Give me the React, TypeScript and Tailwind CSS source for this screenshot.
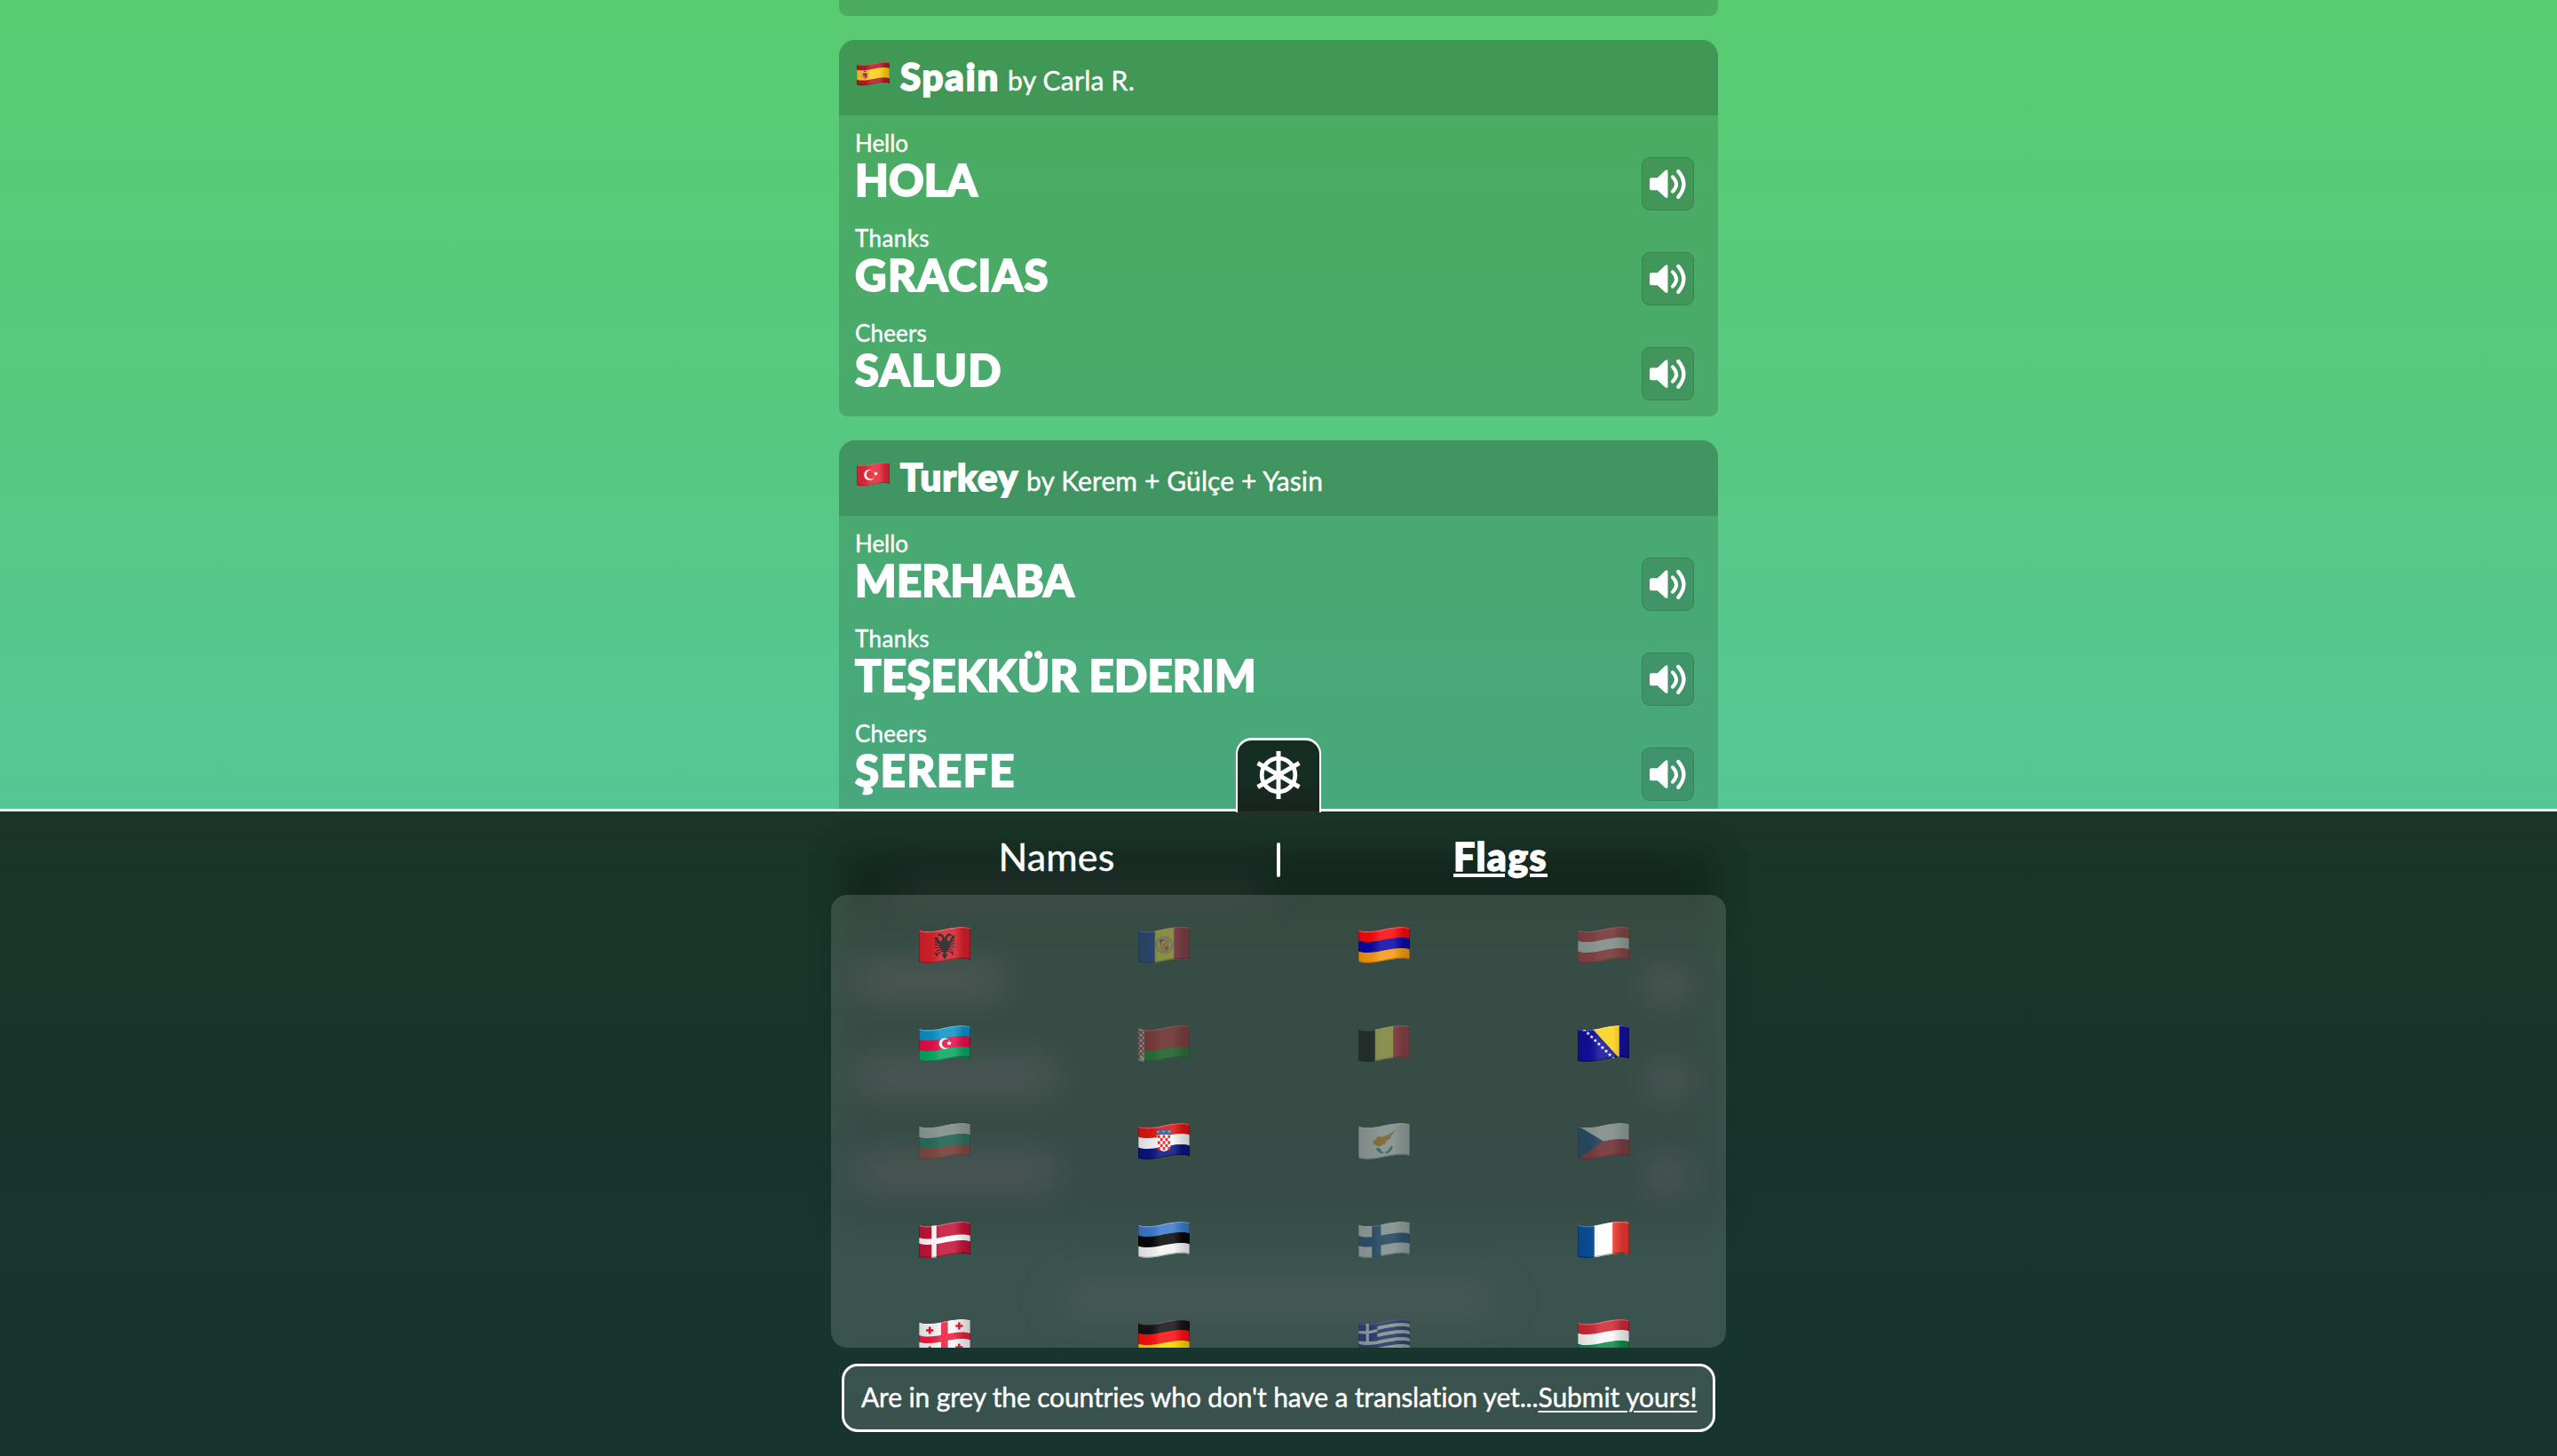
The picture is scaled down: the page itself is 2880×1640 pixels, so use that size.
import React, { useLayoutEffect, useRef, useState } from "react";

/* Text set to an exact advance width by distributing letter spacing. */
function Fit({ w, className = "", children }: { w: number; className?: string; children: string }) {
  const ref = useRef<HTMLSpanElement>(null);
  const [spacing, setSpacing] = useState(0);
  useLayoutEffect(() => {
    if (!ref.current) return;
    const natural = ref.current.getBoundingClientRect().width;
    setSpacing((w - natural) / children.length);
  }, []);
  return (
    <span ref={ref} className={"inline-block whitespace-nowrap " + className} style={{ letterSpacing: spacing + "px" }}>
      {children}
    </span>
  );
}

/* Region of a waving flag between two heights (0 = top edge, 36 = bottom edge). */
function wave(a: number, b: number, x0 = 0) {
  const t = a + 3.6;
  const u = b + 3.6;
  return `M${x0} ${t}C9 ${t + 3} 20 ${t + 0.8} 28 ${t - 1} S48 ${t - 5.2} 57 ${t - 2.4}V${u - 2.4}C48 ${u - 5.2} 36 ${u - 2.8} 28 ${u - 1}S9 ${u + 3} ${x0} ${u}Z`;
}
const Band = ({ a, b, c }: { a: number; b: number; c: string }) => <path d={wave(a, b)} fill={c} />;
const Bands = ({ c }: { c: string[] }) => (
  <>
    {c.map((v, i) => (
      <Band key={i} a={(36 / c.length) * i} b={(36 / c.length) * (i + 1) + (i < c.length - 1 ? 0.4 : 0)} c={v} />
    ))}
  </>
);
const Cols = ({ c }: { c: [string, number][] }) => (
  <>
    {c.map(([v, x], i) => (
      <rect key={i} x={x} y="-1" width={58 - x} height="44" fill={v} />
    ))}
  </>
);
const star = (cx: number, cy: number, r: number) =>
  Array.from({ length: 10 }, (_, i) => {
    const q = i % 2 ? r * 0.42 : r;
    const t = (i * Math.PI) / 5 - Math.PI / 2;
    return `${cx + q * Math.cos(t)},${cy + q * Math.sin(t)}`;
  }).join(" ");

const plus = (x: number, y: number) => (
  <path d={`M${x - 4} ${y}H${x + 4}M${x} ${y - 4}V${y + 4}`} stroke="#e8112d" strokeWidth="2.6" />
);

const art: Record<string, React.ReactNode> = {
  albania: (
    <>
      <Band a={0} b={36} c="#d8202b" />
      <g fill="none" stroke="#1c1c1c">
        <path d="M28.500 12.500Q34 17 33.500 22Q32 27 28.500 29.500Q25 27 23.500 22Q23 17 28.500 12.500Z" fill="#1c1c1c" />
        <path d="M27.500 15Q27 9.500 23 8.500L21.500 10M29.500 15Q30 9.500 34 8.500L35.500 10" strokeWidth="2.400" />
        <path d="M24 19.500L19 12M33 19.500L38.500 9.500" strokeWidth="2.200" />
        <path d="M24 18L17.500 12.500M24 20L17.500 16M24 22L17.500 19.500M24 23.500L18 23.500M25 25L19.500 27.500M33 18L39.500 11M33 20L39.500 14.500M33 22L39.500 18M33 23.500L39.500 22M32 25L38 26" strokeWidth="1.200" />
        <path d="M26 27L18.500 31.500M31 27L38.500 29.500M18 29l2.500 4M36.500 27.500l1 4.500" strokeWidth="1.300" />
      </g>
      <path d="M28.500 27l1.500 3.500 1.500-.5-1 3.500-2 3-2-3-1-3.500 1.500 .5z" fill="#1c1c1c" />
    </>
  ),
  andorra: (
    <>
      <Cols c={[["#1a3d9c", 0], ["#f0dc20", 18.5], ["#c8203c", 39.500]]} />
      <circle cx="29" cy="20.500" r="8.800" fill="#f0dc20" stroke="#a8a090" strokeWidth="3" strokeDasharray="3 1" />
      <path d="M24 14h10v10q-1 5-5 5t-5-5z" fill="#d8a040" />
      <rect x="24" y="14" width="4.500" height="6" fill="#c03048" />
      <rect x="29.500" y="22" width="4" height="4" fill="#d84040" />
      <path d="M26 20l2-4" stroke="#fff" strokeWidth="1.500" />
    </>
  ),
  armenia: <Bands c={["#f80a0a", "#0a08a8", "#f59a10"]} />,
  austria: <Bands c={["#d8303a", "#f4f4f4", "#d8303a"]} />,
  azerbaijan: (
    <>
      <Bands c={["#0d92c4", "#e4104a", "#0aa862"]} />
      <circle cx="28.500" cy="20.500" r="6.200" fill="#fff" />
      <circle cx="30.500" cy="20.500" r="5" fill="#e4104a" />
      <polygon points={star(33.500, 20, 3.200)} fill="#fff" />
    </>
  ),
  belarus: (
    <>
      <Bands c={["#c0202c", "#c0202c", "#129020"]} />
      <rect x="0" y="0" width="6.500" height="42" fill="#f0e8e8" />
      <path d="M0 5l3 3-3 3 3 3-3 3 3 3-3 3 3 3-3 3 3 3-3 3 3 3M6 5l-3 3 3 3-3 3 3 3-3 3 3 3-3 3 3 3-3 3 3 3" stroke="#b8202c" strokeWidth="1.200" fill="none" />
    </>
  ),
  belgium: <Cols c={[["#0c0c10", 0], ["#f0e048", 18.500], ["#d8243c", 38.500]]} />,
  bosnia: (
    <>
      <rect width="57" height="42" fill="#12109a" />
      <path d="M12 -1H46V37Z" fill="#fcd116" />
      {Array.from({ length: 9 }, (_, i) => (
        <polygon key={i} points={star(7.500 + i * 4, 5 + i * 4, 2.500)} fill="#fff" />
      ))}
    </>
  ),
  bulgaria: <Bands c={["#f2f2f2", "#129070", "#c83a2c"]} />,
  croatia: (
    <>
      <Bands c={["#dd1414", "#f4f4f4", "#0a1480"]} />
      <path d="M21 13H36V26q-2 5-7.500 6Q23 31 21 26Z" fill="#fff" />
      {Array.from({ length: 25 }, (_, i) =>
        i % 2 ? null : <rect key={i} x={21.500 + (i % 5) * 2.800} y={13.500 + Math.floor(i / 5) * 3.400} width="2.800" height="3.400" fill="#e01818" />,
      )}
      <path d="M20.500 12l-.5-4 3 1 2-2.500 3 1.500 3-2 2 2 3-1-.5 5z" fill="#2850a0" />
      <path d="M21 10h2M27 9.500h2M33 9.500h3" stroke="#30d0e0" strokeWidth="2" />
      <path d="M24.500 8v3M31 8v3" stroke="#d02030" strokeWidth="1.200" />
    </>
  ),
  cyprus: (
    <>
      <Band a={0} b={36} c="#f2f2f2" />
      <path d="M16.500 20l3-1.500 2-3.500 5 .5 6-2 9-6-5.500 7-.5 3-4 2-2 4-7 3-4-2-2-2z" fill="#dc8a20" />
      <path d="M20.500 28q2 5 7 5.500M37 26q-1 6-7 7.500M22 29.500l3 .5M34 30l2-1" stroke="#2c8a68" strokeWidth="2.200" fill="none" />
    </>
  ),
  czech: (
    <>
      <Band a={0} b={18.400} c="#f2f2f2" />
      <Band a={18} b={36} c="#cc2030" />
      <path d="M0 3L28.500 20.500 0 41Z" fill="#14487e" />
    </>
  ),
  denmark: (
    <>
      <Band a={0} b={36} c="#c4143a" />
      <Band a={14.500} b={21} c="#fff" />
      <rect x="14" y="0" width="5.400" height="44" fill="#fff" />
    </>
  ),
  estonia: <Bands c={["#3c7acb", "#080808", "#f4f4f4"]} />,
  finland: (
    <>
      <Band a={0} b={36} c="#f2f2f2" />
      <Band a={12.500} b={23.500} c="#1c4c8c" />
      <rect x="15" y="0" width="10" height="44" fill="#1c4c8c" />
    </>
  ),
  france: <Cols c={[["#0a509c", 0], ["#ffffff", 18.500], ["#ee3a30", 38.500]]} />,
  georgia: (
    <>
      <Band a={0} b={36} c="#f6f6f6" />
      <Band a={14.500} b={22} c="#ea2040" />
      <rect x="24.500" y="0" width="7.500" height="44" fill="#ea2040" />
      {plus(12, 12.500)}
      {plus(44.500, 7.500)}
      {plus(12, 34.500)}
      {plus(44.500, 31.500)}
    </>
  ),
  germany: <Bands c={["#141414", "#fa1010", "#f8d400"]} />,
  greece: (
    <>
      <Bands c={["#1a2494", "#f2f2f2", "#1a2494", "#f2f2f2", "#1a2494", "#f2f2f2", "#1a2494", "#f2f2f2", "#1a2494"]} />
      <rect x="0" y="0" width="21" height="24.500" fill="#1a2494" />
      <path d="M0 14.500Q10 16 21 12.500M10 0V26" stroke="#f2f2f2" strokeWidth="3.200" fill="none" />
    </>
  ),
  hungary: <Bands c={["#d02836", "#f6f6f6", "#108a48"]} />,
  spain: (
    <>
      <Band a={0} b={36} c="#b81828" />
      <Band a={9.500} b={27} c="#fcd014" />
      <path d="M9 18v10M20 18v10" stroke="#d8b080" strokeWidth="2.500" />
      <path d="M11 19h7v8q-3.500 4-7 0z" fill="#c02838" />
      <path d="M11 24h3.500v4.500q-3 0-3.500-2z" fill="#e0a020" />
      <path d="M11.500 17q3-4 6 0z" fill="#a03820" />
      <circle cx="15" cy="23.500" r="1.500" fill="#384890" />
    </>
  ),
  turkey: (
    <>
      <Band a={0} b={36} c="#e4283a" />
      <circle cx="22" cy="21.500" r="9.500" fill="#fff" />
      <circle cx="24.500" cy="21" r="7.600" fill="#e4283a" />
      <polygon points={star(33, 19.500, 4.300)} fill="#fff" />
    </>
  ),
};

function Flag({ name, className }: { name: string; className: string }) {
  const id = React.useId();
  return (
    <svg viewBox="0 0 57 42" preserveAspectRatio="none" className={className}>
      <defs>
        <clipPath id={id + "c"}>
          <path d={wave(0, 36)} />
        </clipPath>
        <linearGradient id={id + "g"} x1="0" x2="1" y1="0" y2="0">
          <stop offset="0" stopColor="#000" stopOpacity=".12" />
          <stop offset=".22" stopColor="#000" stopOpacity=".06" />
          <stop offset=".42" stopColor="#fff" stopOpacity=".12" />
          <stop offset=".68" stopColor="#fff" stopOpacity=".12" />
          <stop offset=".86" stopColor="#000" stopOpacity=".12" />
          <stop offset="1" stopColor="#000" stopOpacity=".18" />
        </linearGradient>
      </defs>
      <g clipPath={`url(#${id}c)`}>
        {art[name]}
        <path d={wave(0, 36)} fill={`url(#${id}g)`} />
        <path d={wave(34.600, 36)} fill="#000" fillOpacity=".3" />
        <path d={wave(0, 1.300)} fill="#fff" fillOpacity=".25" />
        <path d="M.5 0V42M56.500 0V42" stroke="#000" strokeOpacity=".25" />
      </g>
    </svg>
  );
}

const SpeakerIcon = () => (
  <svg viewBox="0 0 59 60" className="h-[60px] w-[59px]" fill="none">
    <path d="M11 23.300H17.800L26.500 15q3-2 3 1V44q0 3-3 1.200L17.800 37.300H11Q9 37.300 9 35.300V25.300Q9 23.300 11 23.300Z" fill="#fff" />
    <path d="M35 22.300Q43 30.500 35 38.700" stroke="#fff" strokeWidth="4" strokeLinecap="round" />
    <path d="M41.300 16Q53.500 30.300 41.300 44.800" stroke="#fff" strokeWidth="4.300" strokeLinecap="round" />
  </svg>
);

const WheelIcon = () => (
  <svg viewBox="-28 -28 56 56" className="h-14 w-14" fill="none" stroke="#fff" strokeWidth="5">
    <circle r="18.800" strokeWidth="4.800" />
    <path d="M0 -27V27M-23.400 -13.500L23.400 13.500M-23.400 13.500L23.400 -13.500" />
  </svg>
);

type Phrase = { label: string; lw: number; text: string; w: number };
type Country = { flag: string; name: string; nw: number; by: string; bw: number; phrases: Phrase[] };

const countries: Country[] = [
  {
    flag: "spain", name: "Spain", nw: 112, by: "by Carla R.", bw: 143,
    phrases: [
      { label: "Hello", lw: 60, text: "HOLA", w: 138 },
      { label: "Thanks", lw: 84, text: "GRACIAS", w: 219 },
      { label: "Cheers", lw: 81, text: "SALUD", w: 166 },
    ],
  },
  {
    flag: "turkey", name: "Turkey", nw: 133, by: "by Kerem + Gülçe + Yasin", bw: 334,
    phrases: [
      { label: "Hello", lw: 60, text: "MERHABA", w: 247 },
      { label: "Thanks", lw: 84, text: "TEŞEKKÜR EDERIM", w: 452 },
      { label: "Cheers", lw: 81, text: "ŞEREFE", w: 181 },
    ],
  },
];

function Card({ c }: { c: Country }) {
  return (
    <section className="h-[424px] overflow-hidden rounded-t-[18px] rounded-b-[9px] bg-black/15">
      <header className="flex h-[85px] bg-black/12 pl-5">
        <Flag name={c.flag} className="mt-[25px] h-[27px] w-[37px]" />
        <h2 className="ml-[12px] flex items-baseline leading-[83px]">
          <Fit w={c.nw} className="text-[42px] font-black [-webkit-text-stroke:1.8px_white]">{c.name}</Fit>
          <Fit w={c.bw} className="ml-[9px] text-[30px] [-webkit-text-stroke:0.4px_white]">{c.by}</Fit>
        </h2>
      </header>
      <div className="pt-[12px]">
        {c.phrases.map((p) => (
          <div key={p.label} className="flex h-[107.200px] justify-between pr-[27px] pl-[18px]">
            <div className="pt-px">
              <div className="h-[38px] leading-[37px]">
                <Fit w={p.lw} className="text-[26px] [-webkit-text-stroke:0.4px_white]">{p.label}</Fit>
              </div>
              <div className="h-14 leading-[43px]">
                <Fit w={p.w} className="text-[49px] font-black [-webkit-text-stroke:1.8px_white]">{p.text}</Fit>
              </div>
            </div>
            <button className="mt-[35px] h-[60px] w-[59px] rounded-[9px] bg-black/12 shadow-[inset_0_0_0_1px_rgba(0,0,0,0.12)]">
              <SpeakerIcon />
            </button>
          </div>
        ))}
      </div>
    </section>
  );
}

const grid: [string, boolean][] = [
  ["albania", true], ["andorra", false], ["armenia", true], ["austria", false],
  ["azerbaijan", true], ["belarus", false], ["belgium", false], ["bosnia", true],
  ["bulgaria", false], ["croatia", true], ["cyprus", false], ["czech", false],
  ["denmark", true], ["estonia", true], ["finland", false], ["france", true],
  ["georgia", true], ["germany", true], ["greece", false], ["hungary", true],
];

/* Soft shapes of the page content that show through the drawer. */
const Haze = () => (
  <div className="pointer-events-none absolute inset-0 overflow-hidden">
    <div className="absolute top-[40px] left-[945px] h-[424px] w-[990px] rounded-[18px] bg-black/14 blur-[18px]" />
    <div className="absolute top-[46px] left-[945px] h-[72px] w-[990px] bg-black/12 blur-[18px]" />
    <div className="absolute top-[72px] left-[1010px] h-[34px] w-[420px] bg-[#e696be]/8 blur-[20px]" />
    <div className="absolute top-[172px] left-[965px] h-[36px] w-[165px] bg-[#e696be]/15 blur-[20px]" />
    <div className="absolute top-[280px] left-[965px] h-[36px] w-[225px] bg-[#e696be]/15 blur-[20px]" />
    <div className="absolute top-[388px] left-[965px] h-[36px] w-[225px] bg-[#e696be]/15 blur-[20px]" />
    <div className="absolute top-[178px] left-[1856px] h-[36px] w-[44px] bg-[#e696be]/14 blur-[18px]" />
    <div className="absolute top-[285px] left-[1856px] h-[36px] w-[44px] bg-[#e696be]/14 blur-[18px]" />
    <div className="absolute top-[392px] left-[1856px] h-[36px] w-[44px] bg-[#e696be]/14 blur-[18px]" />
    <div className="absolute top-[530px] left-[1190px] h-[40px] w-[500px] bg-[#e696be]/9 blur-[24px]" />
  </div>
);

export default function App() {
  return (
    <div className="relative h-[1640px] w-full overflow-hidden bg-[linear-gradient(180deg,#59cb70_0px,#57c87f_450px,#55c694_911px,#54c4a4_1640px)] font-['Lato','Noto_Sans',sans-serif] text-white">
      <main className="mx-auto flex w-[990px] flex-col gap-[27px]">
        <div className="h-[18px] rounded-b-[9px] bg-black/15" />
        {countries.map((c) => (
          <Card key={c.flag} c={c} />
        ))}
      </main>

      <aside className="absolute inset-x-0 top-[911px] bottom-0 border-t-[3px] border-white bg-[linear-gradient(180deg,#1b3528,#18362a_18%,#18352d_50%,#173430)]">
        <Haze />
        <button className="absolute -top-[83px] left-[1392px] flex h-[84px] w-24 justify-center rounded-t-[18px] border-x-[2.500px] border-t-[3px] border-white bg-[linear-gradient(180deg,#162d23_55%,#18231d_79px,#2e2c2c_80px,#2e2c2c_82px,#101814_83px)] pt-[11px]">
          <WheelIcon />
        </button>
        <div className="relative mx-auto w-[1008px]">
          <nav className="mx-auto flex h-[94px] w-[1000px] text-center text-[43px] leading-[101px]">
            <div className="w-[500px]">
              <Fit w={131} className="[-webkit-text-stroke:0.4px_white]">Names</Fit>
            </div>
            <div className="mt-[35px] -ml-0.5 -mr-0.5 h-[39px] w-1 shrink-0 rounded-full bg-white" />
            <div className="w-[500px]">
              <Fit w={106} className="font-black underline decoration-[4px] underline-offset-[3px] [-webkit-text-stroke:1.500px_white]">Flags</Fit>
            </div>
          </nav>
          <div className="h-[510px] overflow-hidden rounded-[18px] bg-white/15 pt-[2px] pr-[14px] pl-[4px]">
            <div className="grid grid-cols-4">
              {grid.map(([name, on]) => (
                <div key={name} className="flex h-[110.500px] items-center justify-center">
                  <Flag name={name} className={on ? "h-[42px] w-[58px]" : "h-[42px] w-[58px] opacity-45"} />
                </div>
              ))}
            </div>
          </div>
          <div className="mx-auto mt-[18px] flex h-[77px] w-[984px] rounded-[18px] border-[3px] border-white bg-white/15 pl-[19px] text-[30px] leading-[69px] [-webkit-text-stroke:0.4px_white]">
            <Fit w={763}>Are in grey the countries who don't have a translation yet...</Fit>
            <Fit w={179} className="underline decoration-2 underline-offset-[4px]">Submit yours!</Fit>
          </div>
        </div>
      </aside>
    </div>
  );
}
